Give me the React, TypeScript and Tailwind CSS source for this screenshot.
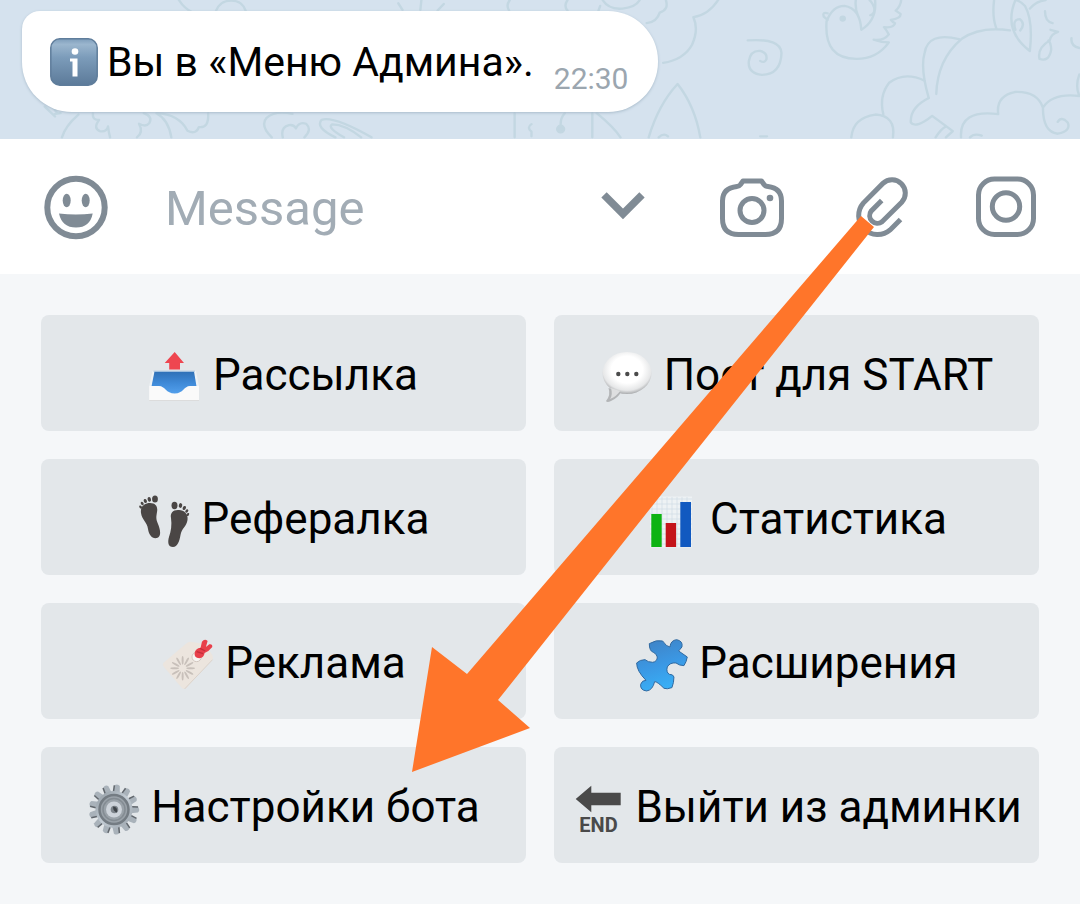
import type { ReactNode } from "react";

function Wallpaper() {
  return (
    <svg className="absolute inset-0 h-full w-full" viewBox="0 0 1080 139" preserveAspectRatio="xMinYMin slice" fill="none" aria-hidden="true">
      {/* left half */}
      <g transform="scale(.344 .331)" stroke="#c3d7e2" strokeWidth="7" strokeLinecap="round" strokeLinejoin="round">
        <path d="M520 0Q535 25 560 38M628 32Q640 2 672 2T714 32M1158 10L1170 30M1225 0L1222 30M1290 12L1272 32M1482 0Q1470 16 1480 32" />
        <path d="M130 322L160 352M150 318L165 340M180 415Q190 380 228 346M158 345L176 342" />
        <path d="M270 342Q268 364 288 362Q270 388 290 396Q310 400 314 382Q316 400 320 415M418 342Q445 352 434 372Q425 385 404 374Q418 400 398 415" />
        <path d="M455 342Q490 362 498 415M455 342Q520 345 545 395Q570 408 578 384Q608 388 605 342" />
        <path d="M790 415Q755 380 775 356Q800 332 850 344M822 415Q815 385 840 378Q855 376 860 388Q870 366 890 374Q908 392 885 415" />
        <path d="M975 415Q915 385 935 362Q970 350 1080 415M1000 415Q950 385 965 376Q1000 375 1050 415M1496 342V415M1545 375Q1530 385 1545 398V412" />
      </g>
      {/* right half */}
      <g transform="translate(540 0) scale(.344 .331)" stroke="#c3d7e2" strokeWidth="7" strokeLinecap="round" strokeLinejoin="round">
        <path d="M80 0Q68 18 80 32M182 0Q200 30 240 26Q278 22 290 0M175 18L170 32M366 0Q375 30 348 38Q340 66 310 70M518 0Q490 45 446 52Q462 90 442 135Q418 180 358 190" />
        <path d="M604 122Q700 115 702 160Q700 225 645 226Q604 222 607 185Q612 152 640 154Q662 160 658 180Q652 192 640 184" />
        <path d="M836 40Q820 35 825 50L836 60M833 65Q850 18 885 18Q930 25 934 90Q980 60 974 0M918 0Q915 25 925 50M833 65Q825 178 920 178Q980 178 1014 128Q990 128 970 120Q1000 124 1014 104Q1008 92 1000 82Q1030 85 1032 70Q1024 66 1020 60Q1050 55 1048 42L1034 32Q1048 20 1050 0M958 0Q972 15 972 30Q972 42 960 46" />
        <circle cx="880" cy="56" r="6" fill="#c3d7e2" />
        <path d="M1152 284Q1155 180 1225 118Q1280 78 1366 92M1130 296Q1105 205 1118 160Q1128 95 1218 118M1320 0Q1314 50 1326 84M1382 0Q1345 92 1424 154Q1434 62 1410 18Q1395 2 1382 0M1424 26Q1440 5 1470 0" />
        <path d="M1382 90Q1372 58 1395 58Q1412 72 1396 92M1468 34Q1468 65 1490 70M1484 90L1506 96Q1485 102 1482 122Q1445 145 1452 178Q1480 188 1486 150Q1485 128 1478 122M1545 115Q1542 140 1568 145" />
        <path d="M1130 296Q1075 325 1078 370Q1092 390 1140 350L1200 396L1180 415M1150 415Q1165 390 1180 382" />
        <path d="M1118 244Q1060 215 1015 250Q985 290 998 345M905 415Q910 355 975 346Q1035 350 1026 415" />
        <path d="M1224 415Q1218 330 1332 345Q1325 290 1380 278Q1445 275 1462 325Q1462 400 1505 404Q1545 395 1534 370Q1516 350 1505 368M1462 325Q1490 280 1568 290M1250 415Q1262 402 1284 410M1568 225Q1555 260 1568 290" />
        <path d="M316 415Q345 315 400 254Q450 320 466 415M345 415Q360 400 372 412M152 342V415M165 342Q215 385 234 415M72 342Q60 355 60 375M640 412H660" />
        <circle cx="60" cy="390" r="10" fill="#c3d7e2" />
      </g>
    </svg>
  );
}

function InfoIcon() {
  return (
    <svg className="h-12 w-12 shrink-0" viewBox="0 0 48 48" role="img" aria-label="info">
      <defs>
        <linearGradient id="info" x1="0" y1="0" x2="0" y2="1">
          <stop offset="0" stopColor="#7d9dba" />
          <stop offset=".12" stopColor="#9bb6ce" />
          <stop offset=".4" stopColor="#7c9cba" />
          <stop offset="1" stopColor="#5c7a99" />
        </linearGradient>
      </defs>
      <rect x=".8" y=".8" width="46.4" height="46.4" rx="9" fill="url(#info)" stroke="#5f7d9b" strokeWidth="1.5" />
      <circle cx="25" cy="13.500" r="3.300" fill="#fff" />
      <path d="M20 20.500h7.500V38.500h-5V23.500H20z" fill="#fff" />
    </svg>
  );
}

function BarIcon({ children }: { children: ReactNode }) {
  return (
    <svg className="h-[66px] w-[66px]" viewBox="0 0 66 66" fill="none" stroke="#808b95" strokeWidth="5" aria-hidden="true">
      {children}
    </svg>
  );
}

function Emoji({ children }: { children: ReactNode }) {
  return (
    <svg className="h-14 w-[52px] shrink-0" viewBox="1 0 52 56" overflow="visible" aria-hidden="true">
      {children}
    </svg>
  );
}

const outbox = (
  <Emoji>
    <defs>
      <linearGradient id="tray" x1="0" y1="0" x2="0" y2="1">
        <stop offset="0" stopColor="#2f70b6" />
        <stop offset=".5" stopColor="#3f8ad8" />
        <stop offset="1" stopColor="#55a2ee" />
      </linearGradient>
    </defs>
    <path d="M4.5 24h43.5l3 15H1.2z" fill="#eef2f5" />
    <path d="M6.5 24.500h39.500l2.500 15L38 48H15L3.500 39.500z" fill="url(#tray)" />
    <path d="M5.500 24.200h41.500" stroke="#a9c6e2" />
    <path d="M1.200 39H11c6 0 7 7.500 15.700 7.500S36 39 42 39h9v14.500H1.200z" fill="#fafafa" />
    <path d="M1.200 53.500H51" stroke="#dcdcdc" />
    <path d="M26.700 5l9.300 11h-4v6.500H21.200V16h-4.500z" fill="#ee4650" />
  </Emoji>
);

const speech = (
  <Emoji>
    <defs>
      <radialGradient id="speech" cx=".5" cy=".42" r=".58">
        <stop offset=".55" stopColor="#fff" />
        <stop offset=".85" stopColor="#e6e7e8" />
        <stop offset="1" stopColor="#a9abad" />
      </radialGradient>
    </defs>
    <path d="M9.500 41Q12 48 7 54Q8 56 12 54Q19 51 22 45z" fill="#b3b5b7" />
    <ellipse cx="28" cy="26" rx="24.500" ry="21" fill="url(#speech)" />
    <path d="M12 41Q14 48 11 52Q18 49 21 44z" fill="#dedfe0" />
    <g fill="#4b4b4b">
      <circle cx="19.300" cy="27" r="2.200" />
      <circle cx="28.300" cy="27" r="2.200" />
      <circle cx="37.300" cy="27" r="2.200" />
    </g>
  </Emoji>
);

const feet = (
  <Emoji>
    <g fill="#4a4645">
      <path d="M4 22C3 15 8 12 13 12c6 0 8 4 7 9-1 6-1 7 1 12 2 5 4 12-1 14-5 1-8-3-9-9C10 31 5 29 4 22z" />
      <ellipse cx="18" cy="8" rx="2.900" ry="3.600" />
      <ellipse cx="12.300" cy="8.400" rx="1.700" ry="2.400" transform="rotate(-15 12.300 8.400)" />
      <ellipse cx="8.300" cy="10" rx="1.500" ry="2.100" transform="rotate(-25 8.300 10)" />
      <ellipse cx="5.200" cy="12.500" rx="1.300" ry="1.900" transform="rotate(-35 5.200 12.500)" />
      <ellipse cx="3.600" cy="16" rx="1.200" ry="1.700" transform="rotate(-35 3.600 16)" />
      <path d="M34 27c-1-5 2-8.500 8-8 5 0 9.500 4 8.500 10-1 7-6 8-7 15-1 6-3 12-7.500 12-5 0-5.500-5-4-10 2-6 3-12 2-19z" />
      <ellipse cx="37.500" cy="14.500" rx="3" ry="3.700" />
      <ellipse cx="43.500" cy="14.500" rx="1.700" ry="2.400" transform="rotate(15 43.500 14.500)" />
      <ellipse cx="47.300" cy="17" rx="1.500" ry="2.100" transform="rotate(25 47.300 17)" />
      <ellipse cx="49.800" cy="20" rx="1.300" ry="1.900" transform="rotate(35 49.800 20)" />
      <ellipse cx="50.800" cy="23.500" rx="1.200" ry="1.700" transform="rotate(35 50.800 23.500)" />
    </g>
  </Emoji>
);

const chart = (
  <Emoji>
    <g transform="translate(-2 0)">
      <rect x="7" y="5.500" width="42" height="51" fill="#eef2f4" />
      <path d="M7 8h42M7 13h42M7 18h42M7 23h42M7 28h42M7 33h42M7 38h42M7 43h42M7 48h42M7 53h42M9 6v50M14 6v50M19 6v50M24 6v50M29 6v50M34 6v50M39 6v50M44 6v50" stroke="#cfdce5" strokeWidth=".7" />
      <path d="M8.300 23h10.400v33H8.300z" fill="#0db312" />
      <path d="M22.700 32h10.400v24H22.700z" fill="#c4141b" />
      <path d="M37.300 11H48v45H37.300z" fill="#1159c0" />
    </g>
  </Emoji>
);

const petals = [0, 30, 60, 90, 120, 150, 180, 210, 240, 270, 300, 330];

const tag = (
  <Emoji>
    <g transform="translate(-10 -4) scale(.333)">
      <path d="M40 96L108 38Q116 31 126 33L158 38Q166 40 172 48L188 74Q191 82 186 88L110 170Q103 177 96 171L42 108Q36 102 40 96z" fill="#ece5de" />
      <path d="M104 174L188 86" stroke="#dbd2ca" strokeWidth="3" />
      {petals.map((a) => (
        <ellipse key={a} cx="98" cy="88" rx="3" ry="13" fill="#c8c0ba" transform={`rotate(${a} 98 112)`} />
      ))}
      <circle cx="140" cy="78" r="14" fill="#f7f5f2" stroke="#d0c5bd" strokeWidth="3" />
      <path d="M134 66Q136 52 152 50L156 32Q164 22 173 30L168 48L178 40Q188 38 187 48Q176 62 164 66Q162 80 148 82Q132 80 134 66z" fill="#e8404b" />
      <path d="M140 62L160 68M150 52L166 60" stroke="#c52d3b" strokeWidth="4" />
    </g>
  </Emoji>
);

const puzzle = (
  <Emoji>
    <defs>
      <linearGradient id="puzzle" x1=".3" y1="0" x2=".6" y2="1">
        <stop offset="0" stopColor="#3f83c6" />
        <stop offset=".5" stopColor="#3b98e4" />
        <stop offset="1" stopColor="#37b2f8" />
      </linearGradient>
    </defs>
    <path
      transform="translate(-14 -4) scale(.333)"
      d="M88 38Q110 25 128 30Q140 48 150 48Q152 28 170 26Q190 30 186 48Q178 58 176 60L202 78Q200 92 192 104Q178 104 168 96Q150 94 142 108Q138 124 148 130Q160 130 162 138Q162 155 156 170Q140 176 132 172Q112 152 104 152Q98 178 80 180Q60 178 62 160Q66 148 78 148Q50 120 50 96Q60 86 75 86Q84 94 98 94Q112 92 112 78Q110 68 100 64Q88 60 88 38Z"
      fill="url(#puzzle)"
      stroke="#2f68a0"
      strokeWidth="3"
      strokeLinejoin="round"
    />
  </Emoji>
);

const teeth = Array.from({ length: 13 }, (_, i) => (i * 360) / 13);

const gear = (
  <Emoji>
    <defs>
      <linearGradient id="gear" x1="0" y1="0" x2="1" y2="1">
        <stop offset="0" stopColor="#8d979f" />
        <stop offset=".5" stopColor="#c3ccd4" />
        <stop offset="1" stopColor="#99a2aa" />
      </linearGradient>
    </defs>
    {teeth.map((a) => (
      <g key={a} transform={`rotate(${a + 8} 28 30.500)`}>
        <path d="M24.500 14L25 6.500Q28 4 30.500 6.500L31.500 14z" fill="#a9b2ba" />
        <path d="M25 6.500v6" stroke="#61676d" strokeWidth="1.500" />
      </g>
    ))}
    <circle cx="28" cy="30.500" r="18.500" fill="url(#gear)" />
    <circle cx="28" cy="30.500" r="14.500" fill="#9aa2a9" stroke="#747c83" strokeWidth="2.500" />
    <circle cx="28" cy="30.500" r="11" fill="none" stroke="#848c93" strokeWidth="1.500" />
    <circle cx="28" cy="30.500" r="8" fill="#cdd3da" />
    <circle cx="28.500" cy="30.500" r="3.800" fill="#7d848b" />
    <path d="M27 27.500q5 0 4 6-4-1-4-6z" fill="#3f4449" />
  </Emoji>
);

const end = (
  <Emoji>
    <path d="M5.700 20L21.300 6.700v7h29.400v12.600H21.300v7z" fill="#4a4a4a" />
    <text x="28.500" y="52.500" textAnchor="middle" fontFamily="Roboto, sans-serif" fontSize="20" fontWeight="700" fill="#4a4a4a">END</text>
  </Emoji>
);

const keys = [
  { icon: outbox, label: "Рассылка" },
  { icon: speech, label: "Пост для START" },
  { icon: feet, label: "Рефералка" },
  { icon: chart, label: "Статистика" },
  { icon: tag, label: "Реклама" },
  { icon: puzzle, label: "Расширения" },
  { icon: gear, label: "Настройки бота" },
  { icon: end, label: "Выйти из админки" },
];

export default function App() {
  return (
    <main className="relative flex min-h-screen flex-col bg-[#f5f7f9] font-['Roboto',sans-serif] text-black">
      {/* CHAT */}
      <section className="relative overflow-hidden bg-[#d5e2ee] px-[22px] pt-[11px] pb-[27px]">
        <Wallpaper />
        <div className="relative flex h-[101px] w-fit items-center rounded-[50px] rounded-tl-[18px] bg-white pr-[30px] pl-7 shadow-[0_1px_3px_#a9bccb]">
          <InfoIcon />
          <p className="ml-[9px] text-[41px] leading-[52px] whitespace-nowrap">Вы в «Меню Админа».</p>
          <time className="ml-5 self-end pb-[15px] text-[30px] leading-9 text-[#9ba6af]">22:30</time>
        </div>
      </section>

      {/* INPUT BAR */}
      <form className="flex h-[135px] items-center bg-white pr-[41px] pl-[43px]" onSubmit={(e) => e.preventDefault()}>
        <button type="button" aria-label="Emoji">
          <BarIcon>
            <circle cx="33" cy="33.500" r="28.700" strokeWidth="6" />
            <g fill="#808b95" stroke="none">
              <ellipse cx="23.700" cy="26.500" rx="4" ry="6.700" />
              <ellipse cx="42.700" cy="26.500" rx="4" ry="6.700" />
              <path d="M16 39.500Q33 41.500 49.700 39.500Q47 53.500 33 53.500T16 39.500z" />
            </g>
          </BarIcon>
        </button>
        <input
          type="text"
          aria-label="Message"
          placeholder="Message"
          className="ml-14 min-w-0 flex-1 bg-transparent pt-1 text-[49px] leading-[60px] outline-none placeholder:text-[#a2acb5]"
        />
        <div className="flex gap-[61px]">
          <button type="button" aria-label="Hide keyboard">
            <BarIcon>
              <path d="M12 20.800L31 40L50 20.800" strokeWidth="7.500" />
            </BarIcon>
          </button>
          <button type="button" aria-label="Camera">
            <BarIcon>
              <path d="M18 12.500Q20 12.500 21.500 10.500L24 7H42.500L45 10.500Q46.500 12.500 49 12.500Q62.500 14 62.500 27V44.500Q62.500 60.500 46.500 60.500H19.500Q3.500 60.500 3.500 44.500V27Q3.500 14 18 12.500Z" strokeLinejoin="round" />
              <circle cx="33" cy="36.500" r="12" />
              <circle cx="51" cy="24" r="3.300" fill="#808b95" stroke="none" />
            </BarIcon>
          </button>
          <button type="button" aria-label="Attach">
            <BarIcon>
              <path d="M54.500 45.500L44.100 55.900A19 19 0 0 1 17.300 29.100L36.900 9.400A13.300 13.300 0 0 1 55.700 28.200L36.100 47.700A7.700 7.700 0 0 1 25.300 36.900L35.700 26.500" />
            </BarIcon>
          </button>
          <button type="button" aria-label="Video message">
            <BarIcon>
              <rect x="5.500" y="5" width="55" height="55.500" rx="16" />
              <circle cx="33" cy="32.500" r="13.700" />
            </BarIcon>
          </button>
        </div>
      </form>

      {/* BOT KEYBOARD */}
      <section className="grid grid-cols-2 gap-7 p-[41px]">
        {keys.map((k) => (
          <button
            key={k.label}
            type="button"
            className="flex h-[116px] items-center justify-center gap-3 rounded-lg bg-[#e3e7ea] pt-1 text-[44px] leading-[52px] whitespace-nowrap"
          >
            {k.icon}
            <span>{k.label}</span>
          </button>
        ))}
      </section>

      {/* pointer to the bot settings key */}
      <svg className="pointer-events-none absolute inset-0 h-full w-full" viewBox="0 0 1080 904" aria-hidden="true">
        <path d="M861 216L874 227L498 700L530 728L412 772L432 647L467 674Z" fill="#ff752a" />
      </svg>
    </main>
  );
}
